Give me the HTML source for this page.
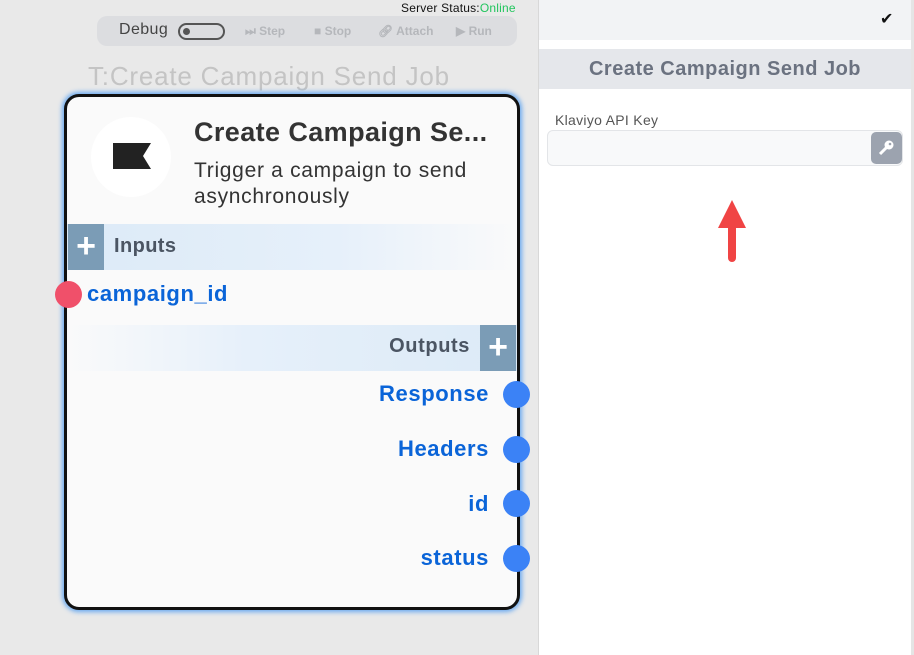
<!DOCTYPE html>
<html><head><meta charset="utf-8"><style>
*{box-sizing:border-box;margin:0;padding:0}
body{width:914px;height:655px;overflow:hidden;background:#e9e9e9;font-family:"Liberation Sans",sans-serif;position:relative}
.abs{position:absolute}
.pl{color:#fff;font-size:34px;font-weight:bold;text-align:center;line-height:44px;background:#7b9cb6}
.lb{font-size:22px;font-weight:bold;color:#0a64d8;letter-spacing:0.6px}
</style></head><body>
<div class="abs" style="left:401px;top:1px;font-size:12px;color:#111;letter-spacing:0.2px">Server Status:<span style="color:#22c55e">Online</span></div>
<div class="abs" style="left:97px;top:16px;width:420px;height:30px;background:#dcdde0;border-radius:10px"></div>
<div class="abs" style="left:119px;top:21px;font-size:16px;color:#444;letter-spacing:0.4px">Debug</div>
<div class="abs" style="left:178px;top:23px;width:47px;height:17px;border:2px solid #555;border-radius:9px"></div>
<div class="abs" style="left:183px;top:28px;width:7px;height:7px;background:#555;border-radius:50%"></div>
<div class="abs" style="left:245px;top:24px;font-size:12px;color:#b5b7bb;font-weight:bold">⏭ Step</div>
<div class="abs" style="left:314px;top:24px;font-size:12px;color:#b5b7bb;font-weight:bold">■ Stop</div>
<div class="abs" style="left:378px;top:24px;font-size:12px;color:#b5b7bb;font-weight:bold">🔗︎ Attach</div>
<div class="abs" style="left:456px;top:24px;font-size:12px;color:#b5b7bb;font-weight:bold">▶ Run</div>
<div class="abs" style="left:88px;top:61px;font-size:26px;color:#c4c4c4;letter-spacing:0.8px">T:Create Campaign Send Job</div>

<div class="abs" style="left:64px;top:94px;width:456px;height:516px;border:3px solid #111;border-radius:15px;background:#fafafa;box-shadow:0 0 5px 2px #6aaaf0;overflow:hidden">
  <div class="abs" style="left:24px;top:20px;width:80px;height:80px;border-radius:50%;background:#fff"></div>
  <svg class="abs" style="left:44px;top:44px" width="42" height="30"><polygon points="2,2 40,2 32,15 40,28 2,28" fill="#222"/></svg>
  <div class="abs" style="left:127px;top:20px;font-size:27px;font-weight:bold;color:#333;letter-spacing:0.4px">Create Campaign Se...</div>
  <div class="abs" style="left:127px;top:61px;font-size:21px;line-height:26px;color:#333;letter-spacing:0.7px">Trigger a campaign to send<br>asynchronously</div>
  <div class="abs" style="left:0;top:127px;width:450px;height:46px;background:linear-gradient(90deg,#dceaf7,#e6f0fa 60%,#fafafa)"></div>
  <div class="abs pl" style="left:1px;top:127px;width:36px;height:46px">+</div>
  <div class="abs" style="left:47px;top:138px;font-size:20px;font-weight:bold;color:#4b5563;letter-spacing:0.4px">Inputs</div>
  <div class="abs lb" style="left:20px;top:184px">campaign_id</div>
  <div class="abs" style="left:0;top:228px;width:450px;height:46px;background:linear-gradient(270deg,#dceaf7,#e6f0fa 60%,#fafafa)"></div>
  <div class="abs pl" style="left:413px;top:228px;width:36px;height:46px">+</div>
  <div class="abs" style="right:47px;top:238px;font-size:20px;font-weight:bold;color:#4b5563;letter-spacing:0.6px">Outputs</div>
  <div class="abs lb" style="right:28px;top:284px">Response</div>
  <div class="abs lb" style="right:28px;top:339px">Headers</div>
  <div class="abs lb" style="right:28px;top:394px">id</div>
  <div class="abs lb" style="right:28px;top:448px">status</div>
</div>
<div class="abs" style="left:55px;top:281px;width:27px;height:27px;border-radius:50%;background:#f0506a"></div>
<div class="abs" style="left:503px;top:381px;width:27px;height:27px;border-radius:50%;background:#3b82f6"></div>
<div class="abs" style="left:503px;top:436px;width:27px;height:27px;border-radius:50%;background:#3b82f6"></div>
<div class="abs" style="left:503px;top:490px;width:27px;height:27px;border-radius:50%;background:#3b82f6"></div>
<div class="abs" style="left:503px;top:545px;width:27px;height:27px;border-radius:50%;background:#3b82f6"></div>

<div class="abs" style="left:538px;top:0;width:376px;height:655px;background:#fff;border-left:1px solid #d8d8d8"></div>
<div class="abs" style="left:911px;top:0;width:3px;height:655px;background:#e5e5e5"></div>
<div class="abs" style="left:539px;top:0;width:372px;height:40px;background:#f2f3f5"></div>
<div class="abs" style="left:880px;top:9px;font-size:16px;color:#111">✔</div>
<div class="abs" style="left:539px;top:49px;width:372px;height:40px;background:#e5e7eb;text-align:center;font-size:20px;font-weight:bold;color:#6b7280;line-height:40px;letter-spacing:0.5px">Create Campaign Send Job</div>
<div class="abs" style="left:555px;top:112px;font-size:14px;color:#555;letter-spacing:0.3px">Klaviyo API Key</div>
<div class="abs" style="left:547px;top:130px;width:356px;height:36px;background:#f8f9fa;border:1px solid #e3e5e8;border-radius:6px"></div>
<div class="abs" style="left:871px;top:132px;width:31px;height:32px;background:#9ca3af;border-radius:5px"></div>
<svg class="abs" style="left:877px;top:139px" width="18" height="18"><circle cx="12" cy="6" r="4.5" fill="#fff"/><line x1="10" y1="8" x2="3" y2="15" stroke="#fff" stroke-width="3"/><circle cx="13" cy="5" r="1.3" fill="#9ca3af"/></svg>
<svg class="abs" style="left:712px;top:198px" width="40" height="70"><polygon points="20,2 34,30 6,30" fill="#f04444"/><rect x="16" y="26" width="8" height="38" rx="4" fill="#f04444"/></svg>
</body></html>
